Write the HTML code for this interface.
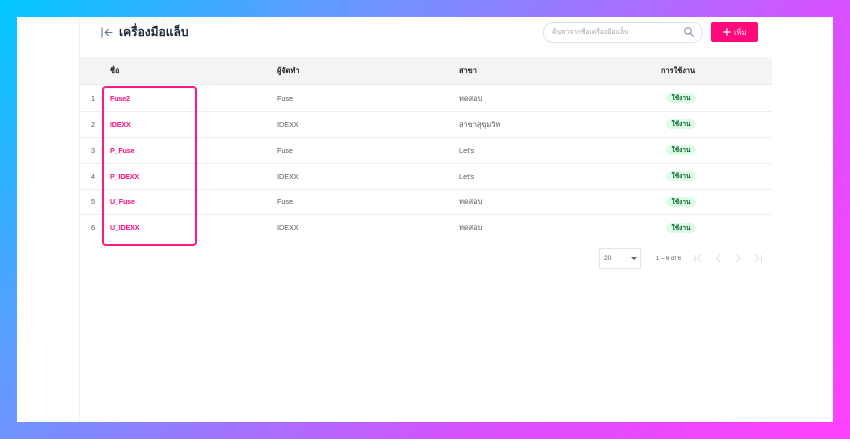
<!DOCTYPE html>
<html lang="th">
<head>
<meta charset="utf-8">
<style>
html,body{margin:0;padding:0}
body{width:850px;height:439px;overflow:hidden;position:relative;background:linear-gradient(131deg,#00c8ff 0%,#6f94ff 31%,#d850ff 69%,#ff40ff 100%);font-family:"Liberation Sans","Noto Sans CJK SC",sans-serif;color:#333}
div,svg{position:absolute}
.t{white-space:nowrap;line-height:12px;height:12px;font-size:7.2px;filter:blur(.25px)}
.name{left:110px;color:#ff0a82;font-weight:bold;font-size:7.2px;letter-spacing:-.2px}
.num{left:84px;width:11px;text-align:right;color:#555}
.c2{left:277px;color:#555}
.c3{left:459px;color:#555;font-size:7.4px}
.h{font-weight:bold;color:#222;font-size:7.4px}
.badge{left:666px;width:30px;height:10px;line-height:11px;border-radius:5px;background:#dcfce7;color:#166534;font-size:6.5px;font-weight:bold;text-align:center;white-space:nowrap}
.line{left:80px;width:692px;height:1px;background:#eceef1}
</style>
</head>
<body>
<div style="left:17px;top:17px;width:816px;height:405px;background:#fff"></div>
<div style="left:79px;top:17px;width:1px;height:405px;background:#f0f1f3"></div>

<svg style="left:100px;top:26px" width="14" height="13" viewBox="0 0 14 13" fill="none" stroke="#64748b" stroke-width="1.1"><path d="M2 1.5V11.5M12.5 6.5H5.5M8.5 3.2L5.2 6.5L8.5 9.8"/></svg>
<div class="t" style="left:119px;top:24px;height:16px;line-height:16px;font-size:12px;font-weight:bold;color:#1e293b">เครื่องมือแล็บ</div>

<div style="left:543px;top:22px;width:158px;height:19px;border:1px solid #dfe4ec;border-radius:10px;background:#fff"></div>
<div class="t" style="left:552px;top:26.5px;color:#a0a9b7;font-size:6.7px">ค้นหาจากชื่อเครื่องมือแล็บ</div>
<svg style="left:683px;top:26px" width="12" height="12" viewBox="0 0 12 12" fill="none" stroke="#94a3b8" stroke-width="1.3"><circle cx="5" cy="5" r="3.2"/><path d="M7.4 7.4L10.6 10.6"/></svg>

<div style="left:711px;top:22px;width:47px;height:20px;background:#ff0a78;border-radius:2px"></div>
<svg style="left:721.5px;top:27px" width="10" height="10" viewBox="0 0 10 10" stroke="#fff" stroke-width="1.2"><path d="M5 1.2V8.8M1.2 5H8.8"/></svg>
<div class="t" style="left:734px;top:26.5px;color:#fde7f2;font-size:7.5px">เพิ่ม</div>

<div style="left:80px;top:57px;width:692px;height:27px;background:#f3f4f6"></div>
<div style="left:80px;top:84px;width:692px;height:1px;background:#e9ebee"></div>
<div class="t h" style="left:110px;top:65px">ชื่อ</div>
<div class="t h" style="left:277px;top:65px">ผู้จัดทำ</div>
<div class="t h" style="left:459px;top:65px">สาขา</div>
<div class="t h" style="left:661px;top:65px">การใช้งาน</div>

<div class="line" style="top:111px"></div>
<div class="line" style="top:137px"></div>
<div class="line" style="top:163px"></div>
<div class="line" style="top:189px"></div>
<div class="line" style="top:214px"></div>

<div class="t num" style="top:92.5px">1</div><div class="t name" style="top:93px">Fuse2</div><div class="t c2" style="top:92.5px">Fuse</div><div class="t c3" style="top:92.5px">ทดสอบ</div><div class="badge" style="top:93px">ใช้งาน</div>
<div class="t num" style="top:118.5px">2</div><div class="t name" style="top:119px">IDEXX</div><div class="t c2" style="top:118.5px">IDEXX</div><div class="t c3" style="top:118.5px">สาขาสุขุมวิท</div><div class="badge" style="top:119px">ใช้งาน</div>
<div class="t num" style="top:144.5px">3</div><div class="t name" style="top:145px">P_Fuse</div><div class="t c2" style="top:144.5px">Fuse</div><div class="t c3" style="top:144.5px">Let's</div><div class="badge" style="top:145px">ใช้งาน</div>
<div class="t num" style="top:170.5px">4</div><div class="t name" style="top:171px">P_IDEXX</div><div class="t c2" style="top:170.5px">IDEXX</div><div class="t c3" style="top:170.5px">Let's</div><div class="badge" style="top:171px">ใช้งาน</div>
<div class="t num" style="top:196px">5</div><div class="t name" style="top:196px">U_Fuse</div><div class="t c2" style="top:196px">Fuse</div><div class="t c3" style="top:196px">ทดสอบ</div><div class="badge" style="top:197px">ใช้งาน</div>
<div class="t num" style="top:222px">6</div><div class="t name" style="top:222px">U_IDEXX</div><div class="t c2" style="top:222px">IDEXX</div><div class="t c3" style="top:222px">ทดสอบ</div><div class="badge" style="top:223px">ใช้งาน</div>

<div style="left:102px;top:86px;width:91px;height:156px;border:2px solid #ff1a82;border-radius:4px"></div>

<div style="left:599px;top:248px;width:40px;height:19px;border:1px solid #e2e6ee;border-radius:2px;background:#fff"></div>
<div class="t" style="left:604px;top:252.5px;font-size:6.5px;color:#555">20</div>
<div style="left:631px;top:257px;width:0;height:0;border-left:3px solid transparent;border-right:3px solid transparent;border-top:3px solid #666"></div>
<div class="t" style="left:656px;top:252.5px;font-size:6px;color:#555">1 – 6 of 6</div>
<svg style="left:692px;top:252px" width="72" height="13" viewBox="0 0 72 13" fill="none" stroke="#dcdee2" stroke-width="1"><path d="M3 3V10M9 3L5.5 6.5L9 10"/><path d="M28 3L24.5 6.5L28 10"/><path d="M44.5 3L48 6.5L44.5 10"/><path d="M63 3L66.5 6.5L63 10M69.5 3V10"/></svg>
</body>
</html>
